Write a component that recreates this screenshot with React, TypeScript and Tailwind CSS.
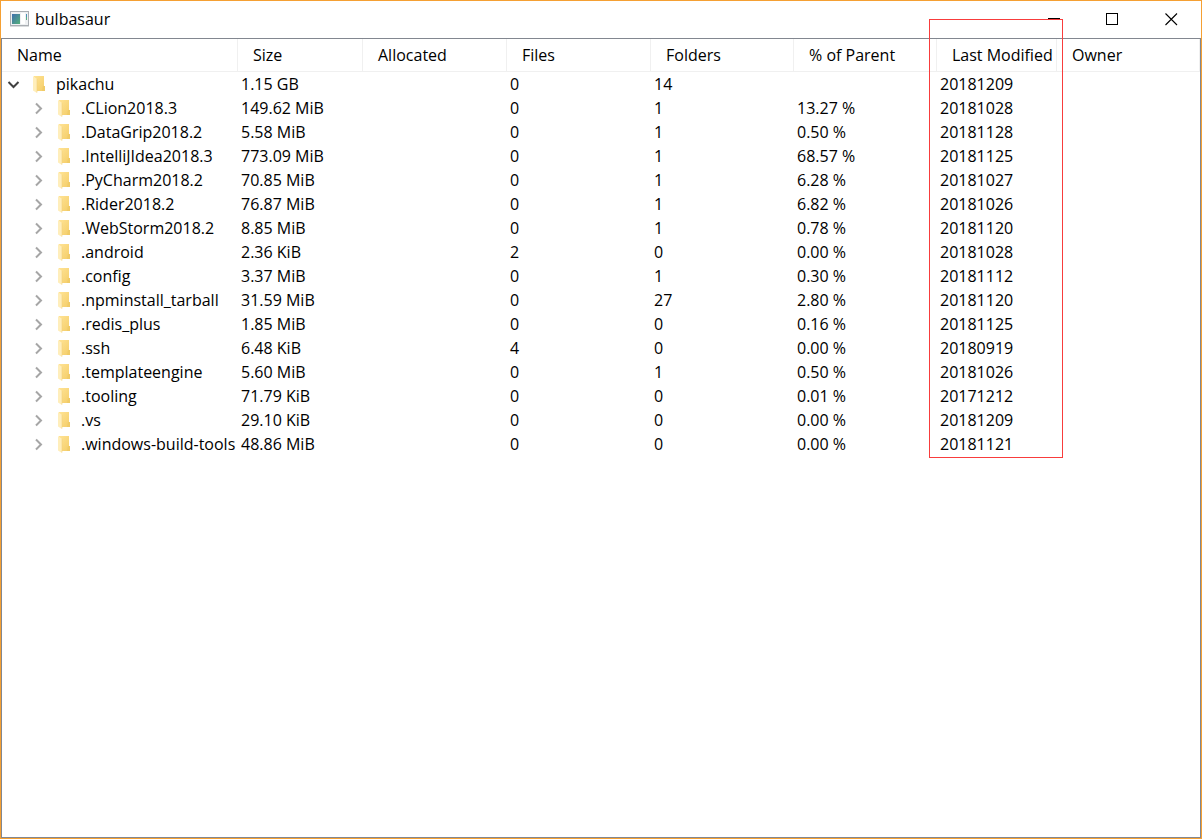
import React, { useState } from 'react';

interface Entry {
  name: string;
  size: string;
  files: number;
  folders: number;
  percent: string;
  modified: string;
}

const root: Entry = { name: 'pikachu', size: '1.15 GB', files: 0, folders: 14, percent: '', modified: '20181209' };

const children: Entry[] = [
  { name: '.CLion2018.3', size: '149.62 MiB', files: 0, folders: 1, percent: '13.27 %', modified: '20181028' },
  { name: '.DataGrip2018.2', size: '5.58 MiB', files: 0, folders: 1, percent: '0.50 %', modified: '20181128' },
  { name: '.IntelliJIdea2018.3', size: '773.09 MiB', files: 0, folders: 1, percent: '68.57 %', modified: '20181125' },
  { name: '.PyCharm2018.2', size: '70.85 MiB', files: 0, folders: 1, percent: '6.28 %', modified: '20181027' },
  { name: '.Rider2018.2', size: '76.87 MiB', files: 0, folders: 1, percent: '6.82 %', modified: '20181026' },
  { name: '.WebStorm2018.2', size: '8.85 MiB', files: 0, folders: 1, percent: '0.78 %', modified: '20181120' },
  { name: '.android', size: '2.36 KiB', files: 2, folders: 0, percent: '0.00 %', modified: '20181028' },
  { name: '.config', size: '3.37 MiB', files: 0, folders: 1, percent: '0.30 %', modified: '20181112' },
  { name: '.npminstall_tarball', size: '31.59 MiB', files: 0, folders: 27, percent: '2.80 %', modified: '20181120' },
  { name: '.redis_plus', size: '1.85 MiB', files: 0, folders: 0, percent: '0.16 %', modified: '20181125' },
  { name: '.ssh', size: '6.48 KiB', files: 4, folders: 0, percent: '0.00 %', modified: '20180919' },
  { name: '.templateengine', size: '5.60 MiB', files: 0, folders: 1, percent: '0.50 %', modified: '20181026' },
  { name: '.tooling', size: '71.79 KiB', files: 0, folders: 0, percent: '0.01 %', modified: '20171212' },
  { name: '.vs', size: '29.10 KiB', files: 0, folders: 0, percent: '0.00 %', modified: '20181209' },
  { name: '.windows-build-tools', size: '48.86 MiB', files: 0, folders: 0, percent: '0.00 %', modified: '20181121' },
];

const columns = [
  { label: 'Name', width: 'w-[236px]' },
  { label: 'Size', width: 'w-[125px]' },
  { label: 'Allocated', width: 'w-[144px]' },
  { label: 'Files', width: 'w-[144px]' },
  { label: 'Folders', width: 'w-[143px]' },
  { label: '% of Parent', width: 'w-[143px]' },
  { label: 'Last Modified', width: 'w-[120px]' },
  { label: 'Owner', width: 'w-auto' },
];

const AppIcon = () => (
  <svg width="19" height="16" viewBox="0 0 19 16" aria-hidden="true">
    <defs>
      <linearGradient id="pane" x1="0" y1="0" x2="1" y2="1">
        <stop offset="0" stopColor="#3f6fae" />
        <stop offset="1" stopColor="#55b07a" />
      </linearGradient>
    </defs>
    <rect x="0.5" y="0.5" width="18" height="14" fill="#eef0f2" stroke="#a9adb2" />
    <rect x="2" y="3" width="8" height="10" fill="url(#pane)" />
    <rect x="11" y="2" width="4" height="11" fill="#ffffff" />
    <rect x="16" y="3" width="1" height="3" fill="#4d8fb5" />
    <rect x="16" y="6" width="1" height="3" fill="#58ad83" />
    <rect x="0" y="15" width="19" height="1" fill="#d9dbdd" />
  </svg>
);

const FolderIcon = () => (
  <svg width="13" height="17" viewBox="0 0 13 17" className="shrink-0" aria-hidden="true">
    <defs>
      <linearGradient id="folder" x1="0" y1="0" x2="1" y2="1">
        <stop offset="0" stopColor="#ffe394" />
        <stop offset="1" stopColor="#f4cd68" />
      </linearGradient>
    </defs>
    <path d="M1 0H11V10H12V15H1Z" fill="url(#folder)" />
    <path d="M10 10H12V15H9Z" fill="#f0cb68" />
    <path d="M0 0L4 3V17L0 14.500Z" fill="#ffeebb" />
    <path d="M4 3V16.500" stroke="#f1d27c" strokeWidth="0.600" />
  </svg>
);

interface RowProps {
  entry: Entry;
  nested?: boolean;
  open?: boolean;
  onToggle?: () => void;
}

const Row: React.FC<RowProps> = ({ entry, nested, open, onToggle }) => (
  <tr className="h-6">
    <td className="p-0">
      <div className={`flex items-center ${nested ? 'pl-[30px]' : 'pl-[5px]'}`}>
        <button type="button" onClick={onToggle} aria-label={`Toggle ${entry.name}`} aria-expanded={!!open} className="mr-[13px] flex size-[13px] items-center justify-center">
          {open ? (
            <svg width="13" height="13" viewBox="0 0 13 13" fill="none" stroke="#404040" strokeWidth="2">
              <path d="M1.500 4L6.500 9L11.500 4" />
            </svg>
          ) : (
            <svg width="13" height="13" viewBox="0 0 13 13" fill="none" stroke="#a6a6a6" strokeWidth="2">
              <path d="M4 1.500L9 6.500L4 11.500" />
            </svg>
          )}
        </button>
        <FolderIcon />
        <span className="ml-[10px] whitespace-nowrap">{entry.name}</span>
      </div>
    </td>
    <td className="p-0 pl-[3px]">{entry.size}</td>
    <td className="p-0" />
    <td className="p-0 pl-[3px]">{entry.files}</td>
    <td className="p-0 pl-[3px]">{entry.folders}</td>
    <td className="p-0 pl-[3px]">{entry.percent}</td>
    <td className="p-0 pl-[3px]">{entry.modified}</td>
    <td className="p-0" />
  </tr>
);

const App: React.FC = () => {
  const [open, setOpen] = useState(true);

  return (
    <div className="relative flex min-h-screen flex-col border border-[#f5a033] bg-white font-['Open_Sans','Noto_Sans',sans-serif] text-[16px] leading-6 text-black">
      <header className="flex h-[37px] items-stretch">
        <div className="flex flex-1 items-center gap-[6px] pb-px pl-[9px]">
          <AppIcon />
          <h1 className="text-[16px]">bulbasaur</h1>
        </div>
        <button type="button" aria-label="Minimize" className="flex w-[59px] items-center justify-center">
          <svg width="13" height="13" viewBox="0 0 13 13">
            <rect x="1" y="5" width="12" height="1" fill="#000" />
          </svg>
        </button>
        <button type="button" aria-label="Maximize" className="flex w-[59px] items-center justify-center">
          <svg width="13" height="13" viewBox="0 0 13 13">
            <rect x="0.5" y="0.5" width="11" height="11" fill="none" stroke="#000" />
          </svg>
        </button>
        <button type="button" aria-label="Close" className="flex w-[59px] items-center justify-center">
          <svg width="13" height="13" viewBox="0 0 13 13">
            <path d="M0.500 0.500L12 12M12 0.500L0.500 12" stroke="#000" strokeWidth="1.100" />
          </svg>
        </button>
      </header>

      <main className="flex-1 border border-[#828790]">
        <table className="w-full table-fixed border-separate border-spacing-0">
          <thead>
            <tr className="h-[33px]">
              {columns.map((col) => (
                <th
                  key={col.label}
                  scope="col"
                  className={`border-r border-b border-[#f0f0f0] p-0 pl-[15px] text-left font-normal whitespace-nowrap ${col.width}`}
                >
                  {col.label}
                </th>
              ))}
            </tr>
          </thead>
          <tbody>
            <Row entry={root} open={open} onToggle={() => setOpen(!open)} />
            {open && children.map((entry) => <Row key={entry.name} entry={entry} nested />)}
          </tbody>
        </table>
      </main>

      {/* highlight around the Last Modified column */}
      <div className="pointer-events-none absolute top-[18px] left-[928px] h-[439px] w-[134px] border border-[#f83c3c]" />
    </div>
  );
};

export default App;
